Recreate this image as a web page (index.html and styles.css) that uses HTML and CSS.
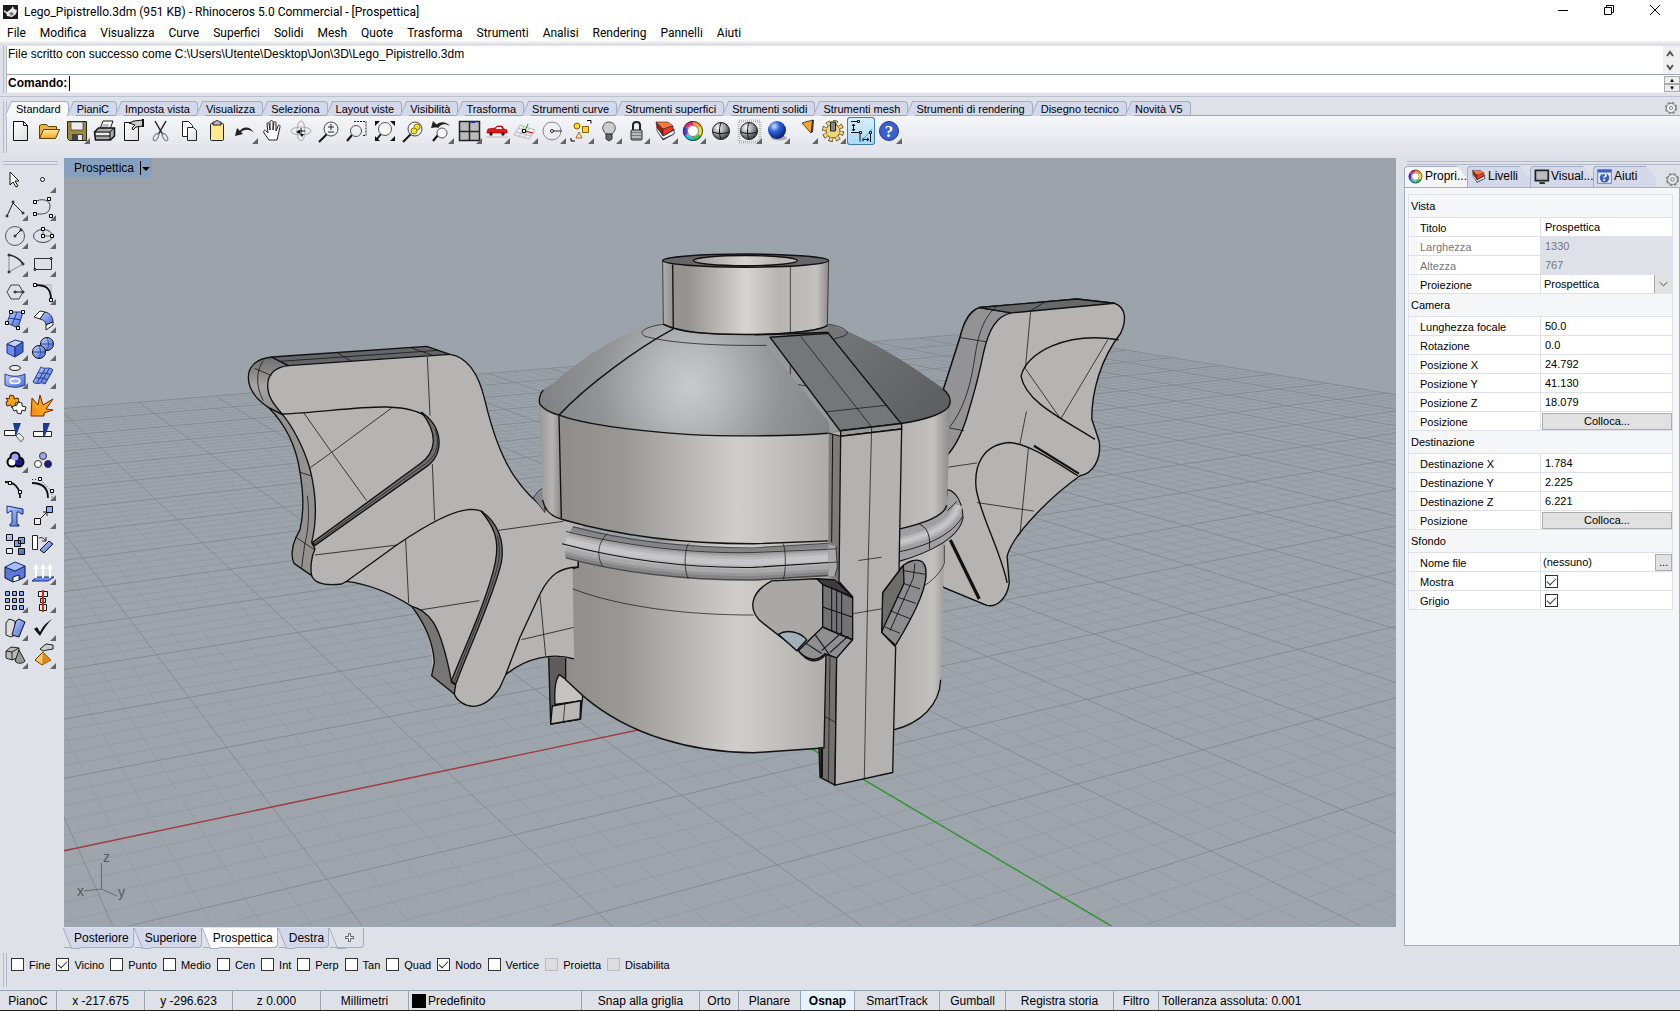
FILE: index.html
```
<!DOCTYPE html>
<html lang="it">
<head>
    <meta charset="UTF-8">
    <meta name="viewport" content="width=device-width, initial-scale=1.0">
    <title>Lego_Pipistrello.3dm - Rhinoceros 5.0 Commercial</title>
    <link rel="stylesheet" href="styles.css">
</head>
<body>

    <!-- shared gradients and small symbols -->
    <svg class="defs" width="0" height="0" aria-hidden="true">
        <defs>
            <linearGradient id="blue" x1="0" y1="0" x2="1" y2="1"><stop offset="0" stop-color="#c3d2ff"/><stop offset="1" stop-color="#4468d8"/></linearGradient>
            <linearGradient id="paper" x1="0" y1="0" x2="1" y2="1"><stop offset="0" stop-color="#fff"/><stop offset="1" stop-color="#ddd"/></linearGradient>
            <linearGradient id="gold" x1="0" y1="0" x2="0" y2="1"><stop offset="0" stop-color="#ffe9a0"/><stop offset="1" stop-color="#f3a81c"/></linearGradient>
            <radialGradient id="grayBall" cx=".35" cy=".3" r=".8"><stop offset="0" stop-color="#fff"/><stop offset=".5" stop-color="#999"/><stop offset="1" stop-color="#222"/></radialGradient>
            <radialGradient id="blueBall" cx=".35" cy=".3" r=".75"><stop offset="0" stop-color="#cfe0ff"/><stop offset=".4" stop-color="#2a62d8"/><stop offset="1" stop-color="#061a6a"/></radialGradient>
            <symbol id="lens" viewBox="0 0 28 28"><path d="M12 17L4 25" stroke="#111" stroke-width="2"/><circle cx="16" cy="12" r="7" fill="#f4f6f6" fill-opacity=".6" stroke="#444"/></symbol>
            <symbol id="wheel" viewBox="0 0 28 28">
                <g fill="none" stroke-width="4"><path d="M14 6a8 8 0 0 1 7 4" stroke="#ff9a1a"/><path d="M21 10a8 8 0 0 1 0 8" stroke="#f4e81e"/><path d="M21 18a8 8 0 0 1-7 4" stroke="#2fc444"/><path d="M14 22a8 8 0 0 1-7-4" stroke="#27bfe0"/><path d="M7 18a8 8 0 0 1 0-8" stroke="#5a35d8"/><path d="M7 10a8 8 0 0 1 7-4" stroke="#e8267c"/></g>
                <circle cx="14" cy="14" r="9.500" fill="none" stroke="#333"/><circle cx="14" cy="14" r="5.500" fill="#fff" stroke="#777"/>
            </symbol>
            <symbol id="layers" viewBox="0 0 28 28"><path d="M6 13l6 10 11-6V12L11 17z" fill="#15205e" stroke="#111" stroke-width=".6"/><path d="M6 10l6 9 11-6v4l-11 5-6-8z" fill="#f4f4ff" stroke="#222" stroke-width=".6"/><path d="M5 5l7 6v7L6 11z" fill="#b3180c" stroke="#222" stroke-width=".6"/><path d="M5 5l12 0 5 4-10 3z" fill="#ff7a3a" stroke="#222" stroke-width=".6"/><path d="M12 12l10-3v4l-10 6z" fill="#ee3a1c" stroke="#222" stroke-width=".6"/></symbol>
            <symbol id="gear" viewBox="0 0 14 14"><circle cx="7" cy="7" r="5.300" fill="none" stroke="#888" stroke-width="1.800" stroke-dasharray="2.600 1.560"/><circle cx="7" cy="7" r="4.600" fill="#eceef2" stroke="#888"/><circle cx="7" cy="7" r="1.600" fill="none" stroke="#888"/></symbol>
        </defs>
    </svg>

    <header class="titlebar">
        <svg class="app-icon" viewBox="0 0 15 14"><rect width="15" height="14" fill="#1a1a1a"/><path d="M1 5l3 2 4-3 2-3 1 3 3 1-1 4-4 3-5-1-1-3-2-1z" fill="#e8e8e8"/><path d="M6 8l3-1 2 2-3 2z" fill="#777"/></svg>
        <span class="title">Lego_Pipistrello.3dm (951 KB) - Rhinoceros 5.0 Commercial - [Prospettica]</span>
        <div class="window-buttons">
            <button aria-label="Riduci a icona"><svg viewBox="0 0 12 12"><path d="M1 6.500h10" stroke="#000" fill="none"/></svg></button>
            <button aria-label="Ripristina"><svg viewBox="0 0 12 12"><path d="M1.500 3.500h7v7h-7zM3.500 3.500v-2h7v7h-2" stroke="#000" fill="none"/></svg></button>
            <button aria-label="Chiudi"><svg viewBox="0 0 12 12"><path d="M1 1l10 10M11 1L1 11" stroke="#000" fill="none"/></svg></button>
        </div>
    </header>

    <nav class="menubar">
        <button>File</button><button>Modifica</button><button>Visualizza</button><button>Curve</button><button>Superfici</button><button>Solidi</button><button>Mesh</button><button>Quote</button><button>Trasforma</button><button>Strumenti</button><button>Analisi</button><button>Rendering</button><button>Pannelli</button><button>Aiuti</button>
    </nav>

    <section class="command">
        <div class="grip"></div>
        <div class="command-main">
            <div class="history">
                <p>File scritto con successo come C:\Users\Utente\Desktop\Jon\3D\Lego_Pipistrello.3dm</p>
                <div class="scroll">
                    <svg viewBox="0 0 14 28"><path d="M4 10l3-4 3 4M4 19l3 4 3-4" fill="none" stroke="#555" stroke-width="2"/></svg>
                </div>
            </div>
            <div class="prompt">
                <label for="cmd">Comando:</label>
                <i class="caret"></i>
                <input id="cmd" type="text">
                <div class="spin"><button aria-label="Precedente">▲</button><button aria-label="Successivo">▼</button></div>
            </div>
        </div>
    </section>

    <section class="toolbar">
        <div class="grip"></div>
        <div class="toolbar-main">
            <div class="tabs">
                <button class="tab active">Standard</button><button class="tab">PianiC</button><button class="tab">Imposta vista</button><button class="tab">Visualizza</button><button class="tab">Seleziona</button><button class="tab">Layout viste</button><button class="tab">Visibilità</button><button class="tab">Trasforma</button><button class="tab">Strumenti curve</button><button class="tab">Strumenti superfici</button><button class="tab">Strumenti solidi</button><button class="tab">Strumenti mesh</button><button class="tab">Strumenti di rendering</button><button class="tab">Disegno tecnico</button><button class="tab">Novità V5</button>
                <svg class="gear"><use href="#gear"/></svg>
            </div>
            <div class="tools">
                <button class="tool" aria-label="Nuovo"><svg viewBox="0 0 28 28"><path d="M6.500 4.500h10l4 4v15h-14z" fill="url(#paper)" stroke="#111"/><path d="M16.500 4.500v4h4" fill="none" stroke="#111"/></svg></button>
                <button class="tool" aria-label="Apri"><svg viewBox="0 0 28 28"><path d="M4.500 21.500v-13l2-1h5l2 2h8v3" fill="#e8b43a" stroke="#5a4208"/><path d="M4.500 21.500l4-9h16l-4 9z" fill="url(#gold)" stroke="#5a4208"/></svg></button>
                <button class="tool more" aria-label="Salva"><svg viewBox="0 0 28 28"><path d="M4.500 4.500h19v19h-17l-2-2z" fill="#9d8a3c" stroke="#222"/><path d="M8 5h12v8H8z" fill="#eee" stroke="#333" stroke-width=".7"/><path d="M9 17h11v6H9z" fill="#444"/><path d="M15 18h4v5h-4z" fill="#eee"/></svg></button>
                <button class="tool" aria-label="Stampa"><svg viewBox="0 0 28 28"><path d="M9 12l3-8h10l-3 8z" fill="#fff" stroke="#111"/><path d="M12 8h6M11 10h6" stroke="#777"/><path d="M3.500 15l4-4h16v8l-4 4h-15z" fill="#aaa" stroke="#111" stroke-width="1.500"/><path d="M4 15h15v8M19 15l4-4M4 19h15" fill="none" stroke="#111"/><path d="M5 16h13v2H5z" fill="#eee"/></svg></button>
                <button class="tool" aria-label="Proprietà"><svg viewBox="0 0 28 28"><path d="M5.500 5.500h10l4 4v14h-14z" fill="url(#paper)" stroke="#111"/><path d="M10 6l5-2 9-1v6l-7 1-3 3-1-2 3-3z" fill="#ccc" stroke="#111"/><path d="M24 2v8" stroke="#111" stroke-width="2"/></svg></button>
                <button class="tool" aria-label="Taglia"><svg viewBox="0 0 28 28"><path d="M8 4l8 14M19 4l-8 14" stroke="#222" stroke-width="1.500"/><ellipse cx="9" cy="20" rx="2" ry="4" transform="rotate(30 9 20)" fill="none" stroke="#888" stroke-width="1.300"/><ellipse cx="18" cy="20" rx="2" ry="4" transform="rotate(-30 18 20)" fill="none" stroke="#888" stroke-width="1.300"/></svg></button>
                <button class="tool" aria-label="Copia"><svg viewBox="0 0 28 28"><path d="M7.500 4.500h6l4 4v11h-10z" fill="#fff" stroke="#222"/><path d="M12.500 10.500h6l3 3v10h-9z" fill="url(#paper)" stroke="#222"/></svg></button>
                <button class="tool" aria-label="Incolla"><svg viewBox="0 0 28 28"><rect x="7.500" y="6.500" width="13" height="17" rx="1" fill="#fbe98c" stroke="#222"/><path d="M10 5h2c0-2 4-2 4 0h2v3h-8z" fill="#bbb" stroke="#222"/></svg></button>
                <button class="tool more" aria-label="Annulla"><svg viewBox="0 0 28 28"><path d="M8 15C12 9 19 9 23 16c-4-4-9-4-13-1z" fill="#222"/><path d="M4 19l2-8 6 6z" fill="#222"/></svg></button>
                <button class="tool" aria-label="Panoramica"><svg viewBox="0 0 28 28"><path d="M10 23l-5-7c-1-3 1-4 3-1l1 1-1-9c0-2 2-2 2 0l1 6V5c0-2 3-2 3 0v8l1-7c0-2 2-2 2 0v8l2-5c1-2 2-1 2 1l-3 13z" fill="#fff" stroke="#222"/></svg></button>
                <button class="tool" aria-label="Ruota vista"><svg viewBox="0 0 28 28"><ellipse cx="14" cy="14" rx="10" ry="4" fill="none" stroke="#aaa"/><ellipse cx="14" cy="14" rx="4" ry="10" fill="none" stroke="#aaa"/><path d="M14 11v6M11 14h7" stroke="#111"/><path d="M9 15l4 2v-4zM15 20l2-3h-4z" fill="#111"/></svg></button>
                <button class="tool" aria-label="Zoom dinamico"><svg viewBox="0 0 28 28"><use href="#lens" width="28" height="28"/><path d="M13 10h6M16 7v6M13 15h6" stroke="#222" fill="none"/></svg></button>
                <button class="tool" aria-label="Zoom finestra"><svg viewBox="0 0 28 28"><path d="M11 4.500h12v14h-4" fill="none" stroke="#222" stroke-dasharray="2 1"/><path d="M9 18l-5 6" stroke="#111" stroke-width="2"/><circle cx="13" cy="14" r="5.500" fill="none" stroke="#555"/></svg></button>
                <button class="tool" aria-label="Zoom estensioni"><svg viewBox="0 0 28 28"><path d="M10 17l-4 5" stroke="#111" stroke-width="2"/><circle cx="14" cy="12" r="6.500" fill="#f6f6f6" stroke="#555"/><path d="M4 4h5L4 9zM24 4h-5l5 5zM4 24v-5l5 5zM24 24v-5l-5 5z" fill="#111"/></svg></button>
                <button class="tool" aria-label="Zoom selezione"><svg viewBox="0 0 28 28"><use href="#lens" width="28" height="28"/><circle cx="18" cy="10" r="3" fill="#f5e12a" stroke="#8a7a00"/><circle cx="15" cy="14" r="3" fill="#f5e12a" stroke="#8a7a00"/></svg></button>
                <button class="tool more" aria-label="Vista precedente"><svg viewBox="0 0 28 28"><path d="M11 18l-5 6" stroke="#111" stroke-width="2"/><circle cx="15" cy="16" r="5" fill="#f6f6f6" stroke="#555"/><path d="M8 9c4-5 11-5 15 0-5-3-9-2-12 2z" fill="#222"/><path d="M4 11l2-7 6 6z" fill="#222"/></svg></button>
                <button class="tool more" aria-label="Viste"><svg viewBox="0 0 28 28"><path d="M4.500 4.500h20v19h-20z" fill="#bbb" stroke="#222" stroke-width="1.500"/><path d="M14.500 4v20M4 14.500h21" stroke="#222" stroke-width="1.500"/><path d="M16 5h4" stroke="#22c" stroke-width="2"/></svg></button>
                <button class="tool more" aria-label="Veicolo"><svg viewBox="0 0 28 28"><path d="M4 15l1-3 7-1 2-2h5l2 3 3 1v3H4z" fill="#e01818" stroke="#900" stroke-width=".7"/><path d="M14 10h4l1 2h-6z" fill="#fff"/><circle cx="8" cy="17" r="1.700" fill="#222"/><circle cx="20" cy="17" r="1.700" fill="#222"/><path d="M3 20h22" stroke="#ccc" stroke-width="1.500"/></svg></button>
                <button class="tool more" aria-label="Piano di costruzione"><svg viewBox="0 0 28 28"><path d="M9 8l15 5-6 9-15-4zM7 11l15 5M5 15l15 4M13 9l-5 11M18 11l-5 10" fill="none" stroke="#bbb"/><path d="M13 14l9 2" stroke="#e00"/><path d="M14 14l3-7" stroke="#0a0"/><path d="M11.500 12.500h3v3h-3z" fill="#fff" stroke="#000"/></svg></button>
                <button class="tool more" aria-label="Cerchio"><svg viewBox="0 0 28 28"><circle cx="13" cy="14" r="9" fill="none" stroke="#888"/><path d="M13 14h10" stroke="#333"/><circle cx="13" cy="14" r="1.500" fill="#fff" stroke="#222"/></svg></button>
                <button class="tool more" aria-label="Seleziona oggetti"><svg viewBox="0 0 28 28"><path d="M20 3.500h4v3M4 21v3h4" fill="none" stroke="#000"/><circle cx="10" cy="9" r="3" fill="#f8dc20" stroke="#8a5a00"/><path d="M15.500 9.500h6v6h-6z" fill="#f8dc20" stroke="#8a5a00"/><path d="M12 15l3 6H9z" fill="#fbe7c0" stroke="#b06818"/></svg></button>
                <button class="tool more" aria-label="Luce"><svg viewBox="0 0 28 28"><path d="M11 17c-6-5-3-12 3-12s9 7 3 12z" fill="#ccc" stroke="#555"/><path d="M11 17h6v5l-3 2-3-2z" fill="#666" stroke="#333"/></svg></button>
                <button class="tool more" aria-label="Blocca"><svg viewBox="0 0 28 28"><path d="M10 13V8c0-4 7-4 7 0v5" fill="none" stroke="#222" stroke-width="2"/><rect x="8" y="13" width="11" height="10" rx="1" fill="#bbb" stroke="#222"/><path d="M9 15.500h9M9 18.500h9M9 21.500h9" stroke="#777"/></svg></button>
                <button class="tool more" aria-label="Livelli"><svg><use href="#layers"/></svg></button>
                <button class="tool more" aria-label="Proprietà colore"><svg><use href="#wheel"/></svg></button>
                <button class="tool" aria-label="Ombreggia"><svg viewBox="0 0 28 28"><circle cx="14" cy="14" r="8.500" fill="url(#grayBall)" stroke="#222"/><path d="M6 15c5 2 11 2 16 0M14 6c-2 4-2 12 0 16" fill="none" stroke="#111"/></svg></button>
                <button class="tool more" aria-label="Ombreggia selezione"><svg viewBox="0 0 28 28"><path d="M4 4h21v21H4z" fill="none" stroke="#bbb" stroke-width="3" stroke-dasharray="1 1"/><circle cx="14" cy="14" r="8.500" fill="url(#grayBall)" stroke="#222"/><path d="M6 15c5 2 11 2 16 0M14 6c-2 4-2 12 0 16" fill="none" stroke="#111"/></svg></button>
                <button class="tool more" aria-label="Rendering"><svg viewBox="0 0 28 28"><ellipse cx="16" cy="21" rx="8" ry="2.500" fill="#aaa"/><circle cx="14" cy="13" r="9" fill="url(#blueBall)"/></svg></button>
                <button class="tool more" aria-label="Riflettore"><svg viewBox="0 0 28 28"><path d="M11 6l11-3-2 13z" fill="#f5a623" stroke="#222" stroke-width=".8"/><path d="M21 3l2 0-1 12-2 1z" fill="#333"/></svg></button>
                <button class="tool more" aria-label="Opzioni"><svg viewBox="0 0 28 28"><circle cx="14" cy="14" r="8.500" fill="none" stroke="#5a4610" stroke-width="5" stroke-dasharray="4 2.670"/><circle cx="14" cy="14" r="7" fill="#f0d47a" stroke="#5a4610"/><circle cx="14" cy="14" r="8.500" fill="none" stroke="#f0d47a" stroke-width="3.500" stroke-dasharray="3 3.670" stroke-dashoffset="-.5"/><path d="M11.500 5h5v9h-5z" fill="#888" stroke="#222"/></svg></button>
                <button class="tool pressed" aria-label="Quote"><svg viewBox="0 0 28 28"><path d="M4 4.500h7M6.500 7v7M4 15.500h9v9M23.500 16v9M15 22.500h7" fill="none" stroke="#111"/><path d="M5 9l1.500-2L8 9M5 12l1.500 2L8 12M17 21l-2 1.500 2 1.500M20 21l2 1.500-2 1.500" fill="none" stroke="#111"/><path d="M14 25L25 12" stroke="#4a8fd0"/><path d="M10.500 3.500h2v2h-2zM12.500 14.500h2v2h-2zM22.500 14.500h2v2h-2z" fill="#fff" stroke="#111"/></svg></button>
                <button class="tool more" aria-label="Aiuti"><svg viewBox="0 0 28 28"><circle cx="14" cy="14" r="9.500" fill="#3a60cc" stroke="#1d3a94"/><text x="14" y="20" class="qmark">?</text></svg></button>
            </div>
        </div>
    </section>

    <main class="workspace">
        <aside class="sidebar">
            <div class="hgrip"></div>
            <div class="palette">
                <button class="tool" aria-label="Selezione"><svg viewBox="0 0 28 28"><path d="M9 6v13l3-3 3 5 2-1-3-5h4z" fill="#fff" stroke="#111"/></svg></button>
                <button class="tool more" aria-label="Punto"><svg viewBox="0 0 28 28"><circle cx="13.500" cy="13.500" r="2" fill="#fff" stroke="#111"/></svg></button>
                <button class="tool more" aria-label="Polilinea"><svg viewBox="0 0 28 28"><path d="M6 22l6-13 10 10" fill="none" stroke="#222"/><g class="node"><circle cx="6" cy="22" r="1"/><circle cx="12" cy="8" r="1"/><circle cx="22" cy="19" r="1"/></g></svg></button>
                <button class="tool more" aria-label="Curva"><svg viewBox="0 0 28 28"><path d="M6 8c5-4 16-3 15 5s-8 7-15 7" fill="none" stroke="#444"/><path class="node" d="M4.500 6.500h3v3h-3zM18.500 3.500h3v3h-3zM4.500 18.500h3v3h-3zM20.500 20.500h3v3h-3z"/></svg></button>
                <button class="tool more" aria-label="Cerchio"><svg viewBox="0 0 28 28"><circle cx="14" cy="14" r="9.500" fill="none" stroke="#555"/><path d="M14 14l6-6" stroke="#111"/><g class="node"><circle cx="14" cy="14" r="1"/><circle cx="20" cy="8" r="1"/></g></svg></button>
                <button class="tool more" aria-label="Ellisse"><svg viewBox="0 0 28 28"><ellipse cx="14" cy="14" rx="9.500" ry="6.500" fill="none" stroke="#444"/><path d="M14 7v7h9" fill="none" stroke="#666"/><path class="node" d="M12.500 5.500h3v3h-3zM12.500 12.500h3v3h-3zM21.500 12.500h3v3h-3z"/></svg></button>
                <button class="tool more" aria-label="Arco"><svg viewBox="0 0 28 28"><path d="M8 5c6 1 11 4 14 9" fill="none" stroke="#222" stroke-width="1.500"/><path d="M22 14L8 22V5" fill="none" stroke="#888"/><g class="node"><circle cx="8" cy="5" r="1"/><circle cx="22" cy="14" r="1"/><circle cx="8" cy="22" r="1"/></g></svg></button>
                <button class="tool more" aria-label="Rettangolo"><svg viewBox="0 0 28 28"><path d="M5.500 8.500h17v11h-17z" fill="none" stroke="#333"/><g class="node"><circle cx="22" cy="8.500" r="1"/><circle cx="6" cy="19.500" r="1"/></g></svg></button>
                <button class="tool more" aria-label="Poligono"><svg viewBox="0 0 28 28"><path d="M10 7h8l4 7-4 7h-8l-4-7z" fill="none" stroke="#444"/><path d="M14 14h8" stroke="#111"/><g class="node"><circle cx="14" cy="14" r="1"/><circle cx="22" cy="14" r="1"/></g></svg></button>
                <button class="tool more" aria-label="Raccorda"><svg viewBox="0 0 28 28"><path d="M6 7h16v15" fill="none" stroke="#aaa"/><path d="M6 7c11 0 16 3 16 15" fill="none" stroke="#111" stroke-width="1.800"/><path class="node" d="M4.500 5.500h3v3h-3zM20.500 20.500h3v3h-3z"/></svg></button>
                <button class="tool more" aria-label="Superficie"><svg viewBox="0 0 28 28"><path d="M10 6h12l-5 16-11-5z" fill="url(#blue)" stroke="#223a8a"/><path d="M16 6l-5 13M8 12l12 2" stroke="#223a8a"/><path class="node" d="M8.500 4.500h3v3h-3zM20.500 4.500h3v3h-3zM15.500 20.500h3v3h-3zM4.500 15.500h3v3h-3z"/></svg></button>
                <button class="tool more" aria-label="Raccorda superfici"><svg viewBox="0 0 28 28"><path d="M5 11l6-6 5 1-5 7z" fill="#fff" stroke="#222"/><path d="M11 13l5-7c5 1 8 5 8 10l-7 3c0-3-2-5-6-6z" fill="url(#blue)" stroke="#222"/><path d="M24 16v3l-7 5v-5z" fill="#fff" stroke="#222"/></svg></button>
                <button class="tool more" aria-label="Parallelepipedo"><svg viewBox="0 0 28 28"><path d="M6 10l8 3v10l-8-4z" fill="#6f8df0" stroke="#1b2c78"/><path d="M6 10l8-4 8 2-8 5z" fill="#c5d3ff" stroke="#1b2c78"/><path d="M14 13l8-5v10l-8 5z" fill="#4563cf" stroke="#1b2c78"/></svg></button>
                <button class="tool more" aria-label="Booleana"><svg viewBox="0 0 28 28"><circle cx="18" cy="10" r="6.500" fill="url(#blue)" stroke="#111"/><circle cx="10" cy="18" r="6.500" fill="url(#blue)" stroke="#111"/><path d="M12 10h12M18 4c2 4 2 8 0 12M4 18h12M10 12c2 4 2 8 0 12" fill="none" stroke="#223a8a" stroke-width=".8"/></svg></button>
                <button class="tool more" aria-label="Proietta curva"><svg viewBox="0 0 28 28"><ellipse cx="14" cy="6" rx="5.500" ry="2.500" fill="#eee" stroke="#222"/><path d="M4 12c6 3 14 3 20 0v11c-6 3-14 3-20 0z" fill="url(#blue)" stroke="#223a8a"/><ellipse cx="14" cy="19" rx="5" ry="2.500" fill="#9db4ff" stroke="#fff" stroke-width="1.500"/></svg></button>
                <button class="tool more" aria-label="Mesh"><svg viewBox="0 0 28 28"><path d="M12 5c4 3 8-1 12 3l-8 14c-5-3-7 2-12-2z" fill="url(#blue)" stroke="#223a8a"/><path d="M9 10c4 3 8-1 12 3M6 15c4 3 8-1 12 3M16 7L8 21M20 7l-8 13" fill="none" stroke="#223a8a"/></svg></button>
                <button class="tool" aria-label="Unisci"><svg viewBox="0 0 28 28"><path d="M5 8l3 1 1-4 4 1 0 3 4-1 1 4-4 1 1 4-4 1-1-3-4 1-1-4 2-1z" fill="#f5a318" stroke="#4a3000"/><path d="M13 16l3-1 1-3 4 1v3l4 1-1 4-3-1-1 4-4-1 0-3-3 1-2-4z" fill="#fff" stroke="#222"/></svg></button>
                <button class="tool" aria-label="Esplodi"><svg viewBox="0 0 28 28"><path d="M3 8l6 7 2-10 3 10 10-6-7 10 7 1-9 3v3H2z" fill="#f7a21b" stroke="#7a2600"/><path d="M3 25V14l6 9" fill="#ff8a10"/></svg></button>
                <button class="tool" aria-label="Taglia oggetti"><svg viewBox="0 0 28 28"><path d="M3.500 12.500h11v5h-11z" fill="#fff" stroke="#222"/><path d="M12 5h8l-5 13z" fill="#1d3a94"/><path d="M15 18l3-3 5 5-3 4z" fill="#e6e6e6" stroke="#666"/></svg></button>
                <button class="tool" aria-label="Suddividi"><svg viewBox="0 0 28 28"><path d="M4.500 13.500h18v5h-18z" fill="#fff" stroke="#222"/><path d="M14 5h7l-5 13h-2z" fill="#1d3a94"/></svg></button>
                <button class="tool more" aria-label="Raggruppa"><svg viewBox="0 0 28 28"><g stroke="#000" stroke-width="3"><circle cx="14" cy="11" r="4"/><circle cx="11" cy="16" r="4"/><circle cx="18" cy="16" r="4"/></g><circle cx="11" cy="16" r="3.500" fill="#fff"/><circle cx="18" cy="16" r="3.500" fill="#1a1a8a"/><circle cx="14" cy="11" r="3.500" fill="#a3a3f5"/></svg></button>
                <button class="tool" aria-label="Separa"><svg viewBox="0 0 28 28"><g stroke="#333"><circle cx="14" cy="10" r="3.500" fill="#a3a3f5"/><circle cx="9" cy="18" r="3.500" fill="#fff"/><circle cx="19" cy="18" r="3.500" fill="#1a1a8a"/></g></svg></button>
                <button class="tool" aria-label="Modifica punti"><svg viewBox="0 0 28 28"><path d="M4 8c9 0 15 5 15 16" fill="none" stroke="#111" stroke-width="1.800"/><path class="node" d="M7.500 7.500h3v3h-3zM17.500 16.500h3v3h-3z"/></svg></button>
                <button class="tool more" aria-label="Punti di controllo"><svg viewBox="0 0 28 28"><path d="M3 9c10 0 16 5 16 15" fill="none" stroke="#111" stroke-width="1.800"/><path d="M3 5.500h8l12 12v9" fill="none" stroke="#222" stroke-dasharray="1 2"/><path class="node" d="M9.500 3.500h3v3h-3zM21.500 15.500h3v3h-3z"/></svg></button>
                <button class="tool" aria-label="Testo"><svg viewBox="0 0 28 28"><path d="M6 4l16 3v5h-2l-2-2-2 0v12l2 1v1H9v-2l2-1V9H9l-2 2H6z" fill="url(#blue)" stroke="#1b2c78"/></svg></button>
                <button class="tool more" aria-label="Sposta"><svg viewBox="0 0 28 28"><path d="M12 16l6-6M14 10h4v4" fill="none" stroke="#222"/><path d="M17.500 4.500h6v6h-6z" fill="#8fa9ff" stroke="#111"/><path d="M5.500 16.500h6v6h-6z" fill="#eee" stroke="#111"/></svg></button>
                <button class="tool" aria-label="Copia oggetti"><svg viewBox="0 0 28 28"><g fill="url(#blue)" stroke="#111"><path d="M5.500 4.500h6v6h-6zM17.500 7.500h6v6h-6zM13.500 10.500h6v6h-6zM17.500 18.500h6v6h-6z"/></g><path d="M5.500 18.500h6v5h-6z" fill="#eee" stroke="#111"/></svg></button>
                <button class="tool" aria-label="Ruota"><svg viewBox="0 0 28 28"><path d="M3.500 5.500h5v14h-5z" fill="#fff" stroke="#222"/><path d="M10 8c3-1 5 0 7 3M13 11h4V7" fill="none" stroke="#222"/><path d="M11 20l9-9 4 3-9 9z" fill="url(#blue)" stroke="#111"/></svg></button>
                <button class="tool more" aria-label="Solido"><svg viewBox="0 0 28 28"><path d="M4 9l10 4 10-5v11l-6 3v-5l-6 2v5l-8-4z" fill="#5878e0" stroke="#111"/><path d="M4 9l10 4 10-5-10-4z" fill="#a9bdff" stroke="#1b2c78"/><path d="M12 24v-5l6-2v5z" fill="#fff" stroke="#1b2c78"/></svg></button>
                <button class="tool more" aria-label="Estrudi"><svg viewBox="0 0 28 28"><path d="M3 23l5-4h17l-6 4z" fill="#6f8df0" stroke="#1b2c78"/><path d="M7 20V9M14 20V9M21 20V9" stroke="#fff" stroke-width="2"/><path d="M4 11l3-5 3 5zM11 11l3-5 3 5zM18 11l3-5 3 5z" fill="#fff"/></svg></button>
                <button class="tool more" aria-label="Serie"><svg viewBox="0 0 28 28"><path d="M4.500 5.500h4v4h-4zM11.500 5.500h4v4h-4zM18.500 5.500h4v4h-4zM4.500 12.500h4v4h-4zM11.500 12.500h4v4h-4zM18.500 12.500h4v4h-4zM11.500 19.500h4v4h-4zM18.500 19.500h4v4h-4z" fill="#8fa9ff" stroke="#111"/><path d="M4.500 19.500h4v4h-4z" fill="#eee" stroke="#111"/></svg></button>
                <button class="tool more" aria-label="Allinea"><svg viewBox="0 0 28 28"><path d="M9.500 5.500h9v5h-9zM11.500 12.500h5v4h-5zM10.500 18.500h7v6h-7z" fill="#eee" stroke="#111"/><path d="M14 4v22" stroke="#d22" stroke-width="2"/></svg></button>
                <button class="tool more" aria-label="Analizza"><svg viewBox="0 0 28 28"><path d="M5 9l3-4 6 2v14l-4 2-5-2z" fill="#ddd" stroke="#222"/><path d="M15 7l3-2 6 3-6 15-7-2z" fill="url(#blue)" stroke="#111"/></svg></button>
                <button class="tool more" aria-label="Controlla"><svg viewBox="0 0 28 28"><path d="M5 15l3-2 3 5c3-6 6-9 12-13-5 5-8 10-12 17z" fill="#111"/></svg></button>
                <button class="tool more" aria-label="Primitive"><svg viewBox="0 0 28 28"><path d="M5 9l5-4 8 1v9l-7 3-6-2z" fill="#bbb" stroke="#222"/><path d="M5 9l6 1v8M11 10l7-4" fill="none" stroke="#222"/><path d="M18 8l6 11c-2 3-8 3-10 0z" fill="#999" stroke="#222"/></svg></button>
                <button class="tool more" aria-label="Piramide"><svg viewBox="0 0 28 28"><path d="M11 7l6-5 7 1v4l-6 1-4 1z" fill="#ccc" stroke="#222"/><path d="M14 10l8 8-9 5-7-5z" fill="#f6c86a" stroke="#6b3d00"/><path d="M14 10l-1 13 9-5z" fill="#d68a20"/></svg></button>
            </div>
        </aside>

        <section class="center">
            <div class="viewport">
                <button class="view-label"><span>Prospettica</span><i></i></button>
                <svg class="scene" viewBox="64 159 1332 768" preserveAspectRatio="xMidYMid slice">
                    <defs>
                        <linearGradient id="sky" x1="0" y1="0" x2="0" y2="1"><stop offset="0" stop-color="#9ba2aa"/><stop offset="1" stop-color="#9ea5ac"/></linearGradient>
                        <linearGradient id="cyl" gradientUnits="userSpaceOnUse" x1="60" y1="0" x2="1290" y2="0"><stop offset="0" stop-color="#9a9998"/><stop offset=".03" stop-color="#b5b4b2"/><stop offset=".05" stop-color="#8e8d8a"/><stop offset=".2" stop-color="#989794"/><stop offset=".36" stop-color="#b8b7b4"/><stop offset=".48" stop-color="#cfceca"/><stop offset=".56" stop-color="#c4c3c0"/><stop offset=".7" stop-color="#aeadab"/><stop offset=".88" stop-color="#b4b3b1"/><stop offset=".96" stop-color="#c2c1be"/><stop offset="1" stop-color="#8c8b89"/></linearGradient>
                        <linearGradient id="neck" gradientUnits="userSpaceOnUse" x1="428" y1="0" x2="926" y2="0"><stop offset="0" stop-color="#b0afad"/><stop offset=".06" stop-color="#949391"/><stop offset=".15" stop-color="#94938f"/><stop offset=".5" stop-color="#d6d5d2"/><stop offset=".7" stop-color="#b6b5b2"/><stop offset=".93" stop-color="#c2c1be"/><stop offset="1" stop-color="#8c8b89"/></linearGradient>
                        <radialGradient id="cone" gradientUnits="userSpaceOnUse" cx="510" cy="430" r="640"><stop offset="0" stop-color="#c8cacc"/><stop offset=".15" stop-color="#b8babc"/><stop offset=".42" stop-color="#929496"/><stop offset=".75" stop-color="#7c7e80"/><stop offset="1" stop-color="#68696b"/></radialGradient>
                        <linearGradient id="coneDark" gradientUnits="userSpaceOnUse" x1="950" y1="300" x2="1200" y2="520"><stop offset="0" stop-color="#737577"/><stop offset="1" stop-color="#5f6062"/></linearGradient>
                        <linearGradient id="strip" x1="0" y1="0" x2="0" y2="1"><stop offset="0" stop-color="#6c6c6e"/><stop offset=".5" stop-color="#a5a4a2"/><stop offset="1" stop-color="#8c8b8a"/></linearGradient>
                    </defs>
                    <rect x="64" y="159" width="1332" height="768" fill="url(#sky)"/>
                    <g fill="none">
                        <path id="grid-minor" class="grid-minor"/>
                        <path id="grid-major" class="grid-major"/>
                        <path id="axis-x" class="axis-x"/>
                        <path id="axis-y" class="axis-y"/>
                    </g>

                    <!-- right wing -->
                    <g transform="scale(1.0714)" stroke="#111" stroke-width="1.300" stroke-linejoin="round">
                        <path d="M914 288L1005 280L1040 284C1052 288 1051 301 1046 312C1028 335 1019 365 1019 392L1026 413C1028 430 1020 443 1008 445C980 465 945 500 940 520L942 545C940 560 930 568 921 566L880 549L860 440L880 366L896 316C900 300 905 291 914 288Z" fill="#b5b4b2"/>
                        <path d="M914 288C904 292 899 303 896 316L880 366L884 426C893 416 899 403 904 385C911 362 914 350 918 330C923 308 930 296 944 293Z" fill="#939396"/>
                        <path d="M914 288L1005 280L1040 284L944 293Z" fill="#67686a"/>
                        <path d="M930 287C915 300 912 320 909 340C905 365 898 385 886 400M896 316L921 320M884 400L900 403M975 283L962 291M962 291L957 345M957 345L990 392L1034 318" fill="none" stroke-width=".7"/>
                        <path d="M1044 318C995 310 958 330 953 352C957 376 992 392 1022 411" fill="none"/>
                        <path d="M1006 445C985 432 960 415 942 414C918 416 909 434 911 456C914 480 934 515 940 545" fill="none"/>
                        <path d="M887 505L914 560" fill="none" stroke-width="3"/>
                        <path d="M880 549L921 566M885 437L912 433M952 415L958 385M912 470L965 478M960 418L952 500" fill="none" stroke-width=".7"/>
                        <path d="M965 417L1007 443" fill="none" stroke-width="2"/>
                    </g>

                    <!-- left wing -->
                    <g transform="translate(220 330) scale(.33333)" stroke="#111" stroke-width="4" stroke-linejoin="round">
                        <path d="M155 84L620 52L690 76C750 85 780 150 795 215C815 300 840 380 885 445C930 510 980 550 1040 575L1090 590L1075 712L1058 720L1062 990C1000 970 920 985 857 1037C835 1090 800 1125 760 1132C735 1132 710 1115 703 1095L640 1045L635 1015C640 980 630 930 600 860L575 832C510 790 440 765 380 757L365 765C320 770 290 765 275 740L222 703C212 690 215 650 228 620L240 602C252 560 250 500 240 430C225 350 190 280 145 235C100 205 85 170 85 145C85 115 110 90 155 84Z" fill="#b5b4b2" stroke="none"/>
                        <path d="M145 235C200 290 230 360 240 430C252 500 250 560 240 602L228 625C212 660 215 690 222 703L275 740C270 715 275 680 285 660L275 640C292 570 290 500 270 420C250 350 215 290 188 257Z" fill="#93928f"/>
                        <path d="M155 84C105 90 85 115 85 145C85 185 115 215 145 235L188 257C165 230 143 205 143 170C143 135 165 115 205 110Z" fill="url(#strip)"/>
                        <path d="M155 84L620 52L690 76L205 110Z" fill="#646568"/>
                        <path d="M575 832C620 890 640 950 643 1000L635 1040L703 1095L707 1068L695 1060C680 980 665 920 640 880C620 850 600 838 575 832Z" fill="#777674"/>
                        <path d="M690 76C750 85 780 150 795 215C815 300 840 380 885 445C930 510 980 550 1040 575M1075 690V714C1020 716 990 735 960 795L900 925L857 1037M1062 990C1000 970 920 985 857 1037L840 1075C815 1115 790 1130 760 1132C735 1132 710 1115 703 1095M575 832C510 790 440 765 380 757L365 765C320 770 285 765 275 740" fill="none"/>
                        <path d="M188 255C300 250 420 232 500 234C560 236 600 245 625 268M380 757L530 648C600 600 690 545 750 541C765 541 780 543 790 550" fill="none"/>
                        <!-- recess walls, thin at the start and wide along the straight part -->
                        <path d="M605 250C675 300 672 380 612 418L284 650L278 640L598 406C650 370 655 315 605 250Z" fill="#6f6f72"/>
                        <path d="M783 546C835 580 855 640 844 700C825 790 750 950 707 1066L694 1056C745 930 805 800 826 700C840 630 820 590 783 546Z" fill="#6f6f72"/>
                        <path d="M645 300C662 345 650 385 605 412L282 645M832 620C842 660 840 690 826 735C805 810 745 945 703 1058" fill="none" stroke-width="2"/>
                        <path d="M622 84L630 260M637 405L644 575M250 250L335 370L440 515M515 237L335 370L272 415M285 678L532 648M557 632L566 822M600 843L778 815M835 604L1030 577M905 932L1062 895M960 800L977 980M180 97L655 64M350 70L395 97M570 55L635 78M104 118L155 140M240 430L272 440M228 625L283 662M262 500C270 560 262 620 255 640L245 715M130 95C110 120 105 170 130 215" fill="none" stroke-width="2.300"/>
                    </g>

                    <!-- body -->
                    <g transform="translate(520 230) scale(.33333 .3635)" stroke="#111" stroke-width="4" stroke-linejoin="round">
                        <path d="M40 740C50 725 60 715 72 712L75 780Z" fill="#88888a" stroke-width="2"/>
                        <path d="M85 1178H137V1240L188 1285L182 1350L92 1363Z" fill="#5d5c5a" stroke="none"/>
                        <path d="M86 1178L92 1362L182 1348L187 1285" fill="none"/>
                        <path d="M105 1308C102 1260 110 1235 118 1226C140 1240 170 1262 188 1283L187 1298Z" fill="#c4c3c1"/>
                        <path d="M97 1312L182 1298L180 1348L92 1362Z" fill="#b9b8b6"/>
                        <path d="M135 1305L130 1356" stroke-width="2"/>
                        <path d="M175 880V930L158 934L163 1186L137 1180V1240L190 1285C330 1395 520 1440 700 1441L910 1428L1120 1378C1200 1360 1262 1310 1262 1240L1275 800Z" fill="url(#cyl)" stroke="none"/>
                        <path d="M175 905V930L158 934M137 1180V1240L190 1285C330 1395 520 1440 700 1441L910 1428M1120 1378C1200 1360 1260 1310 1262 1240" fill="none"/>
                        <path d="M158 990C300 1040 500 1062 700 1062M1273 870V920C1262 945 1240 965 1215 980" fill="none" stroke-width="2"/>

                        <!-- ring -->
                        <path d="M148 862C320 905 520 922 700 922L952 908" fill="none" stroke="#4a4a4b" stroke-width="92"/>
                        <path d="M145 861C320 905 520 921 700 921L952 907" fill="none" stroke="#858587" stroke-width="85"/>
                        <path d="M142 862C320 905 520 922 700 922L952 908" fill="none" stroke="#989899" stroke-width="66"/>
                        <path d="M140 862C320 905 520 922 700 922L952 908" fill="none" stroke="#a9a9aa" stroke-width="50"/>
                        <path d="M138 859C320 902 520 919 700 919L952 905" fill="none" stroke="#b8b8b9" stroke-width="34"/>
                        <path d="M136 857C320 900 520 917 700 917L952 903" fill="none" stroke="#c6c6c8" stroke-width="16"/>
                        <path d="M126 866C320 913 520 933 700 931L952 916" fill="none" stroke-width="3"/>
                        <path d="M138 832C320 872 520 894 700 890L948 880M262 838C235 860 228 900 248 928M505 865C492 890 492 940 505 962M790 865C798 890 798 940 790 964" fill="none" stroke-width="2"/>
                        <path d="M1137 825C1210 808 1285 780 1282 717C1310 722 1328 755 1329 795C1318 850 1230 890 1135 915Z" fill="#a0a0a2" stroke-width="3"/>
                        <path d="M1137 862C1215 847 1300 817 1315 760" fill="none" stroke="#b6b6b8" stroke-width="26"/>
                        <path d="M1137 862C1215 847 1300 817 1315 760" fill="none" stroke="#c6c6c8" stroke-width="12"/>
                        <path d="M1137 888C1215 874 1300 840 1328 790M1198 812C1222 820 1232 845 1228 880M1282 775L1310 750" fill="none" stroke-width="2.500"/>

                        <!-- upper drum -->
                        <path d="M58 470L68 745C75 780 100 793 130 800C300 845 500 866 700 866L930 858L1140 825C1220 808 1280 785 1282 745L1290 480Z" fill="url(#cyl)" stroke="none"/>
                        <path d="M68 745C75 780 100 793 130 800C300 845 500 866 700 866L925 858M1140 825C1220 808 1275 785 1280 760M117 512L124 795" fill="none"/>
                        <path d="M58 470C60 440 80 435 100 425C180 360 290 285 430 255L925 262C1050 300 1180 380 1270 440C1290 455 1295 475 1288 485C1280 505 1220 525 1143 535L925 562C800 572 600 570 500 565C350 555 200 540 117 512C80 500 58 485 58 470Z" fill="url(#cone)" stroke="none"/>
                        <path d="M925 262C1050 300 1180 380 1270 440C1290 455 1295 475 1288 485C1280 505 1220 525 1143 535L925 287Z" fill="url(#coneDark)" stroke="none"/>
                        <path d="M70 443C58 455 56 472 60 482C72 497 90 505 117 512C200 540 350 555 500 565C600 570 800 572 925 562M1143 535C1220 525 1280 505 1288 485C1294 470 1290 455 1268 440" fill="none"/>
                        <path d="M460 275C350 330 200 430 117 512" fill="none"/>
                        <path d="M430 262C380 268 350 282 375 295C450 315 600 322 745 320M925 262C980 270 995 288 970 295L940 303" fill="none" stroke-width="2"/>

                        <!-- neck -->
                        <path d="M428 87L430 262C480 285 560 290 680 290C800 290 900 280 922 265L926 87Z" fill="url(#neck)" stroke-width="2"/>
                        <path d="M430 262C480 285 560 290 680 290C800 290 900 280 922 265M458 98L460 275" fill="none"/>
                        <path d="M811 104V286" stroke-width="2"/>
                        <ellipse cx="677" cy="87" rx="249" ry="18" fill="#66666a"/>
                        <ellipse cx="676" cy="87" rx="156" ry="14" fill="url(#neck)"/>

                        <!-- side window -->
                        <path d="M755 968C690 1000 680 1050 730 1085L835 1160C865 1195 895 1195 918 1170L950 1182L998 1130V1015L960 975L890 962Z" fill="#a9a8a6"/>
                        <path d="M775 1115C800 1100 840 1108 860 1130L830 1160Z" fill="#a3b0ba"/>
                        <path d="M835 1160L908 1095L998 1130L950 1182L915 1168C895 1190 865 1190 835 1160Z" fill="#8f8f92"/>
                        <path d="M908 975L998 1015V1130L908 1095Z" fill="#737375"/>
                        <path d="M890 962L945 965L998 1012L908 978Z" fill="#3d3d3f"/>
                        <path d="M935 985V1105M950 990V1112M965 998V1116M908 1040L998 1068M858 1140L905 1168M885 1115L935 1180M905 1160L965 1110M930 1165L985 1120" fill="none" stroke-width="3"/>
                        <path d="M1137 940C1150 915 1205 895 1216 930C1228 975 1190 1050 1127 1145L1085 1110L1088 1000Z" fill="#8c8c8f"/>
                        <path d="M1088 1000L1150 925L1152 975L1085 1108Z" fill="#6d6d6a"/>
                        <path d="M1152 940L1216 950M1150 975L1200 990M1130 1012L1188 1030M1110 1050L1170 1072M1095 1095L1140 1112M1185 920L1180 960L1110 1105" fill="none" stroke-width="2.500"/>

                        <!-- front slab -->
                        <path d="M715 293L755 299L962 555L930 560L925 530Z" fill="#98989a" stroke="none"/>
                        <path d="M750 298L925 287L1143 535L960 555Z" fill="#757679"/>
                        <path d="M705 291L755 290L925 284" fill="none"/>
                        <path d="M926 562L962 570L957 970L925 955Z" fill="#7d7c7a" stroke="none"/>
                        <path d="M938 566L935 862M926 562L962 570" fill="none" stroke-width="3"/>
                        <path d="M918 1170L950 1180L945 1530L900 1508L897 1428L912 1428Z" fill="#72716f"/>
                        <path d="M905 1430V1508" stroke-width="8"/>
                        <path d="M962 555L1145 535V550L962 570Z" fill="#9a9a9a"/>
                        <path d="M962 570L1145 550L1137 940L1088 1000L1085 1110L1127 1150L1118 1495L945 1530L950 1180L998 1130V1012L957 970Z" fill="#b3b2b0"/>
                        <path d="M842 295L1055 545L1045 905L1033 1512M918 503L1098 485M1000 1058L1085 1045M912 1340L948 1358M930 1175L925 1520M811 375V400M835 428L860 432M1015 912L1085 903" fill="none" stroke-width="2"/>
                        <!-- ring end against the slab -->
                        <path d="M925 868L948 872L952 930L945 955L925 955Z" fill="#a9a9aa" stroke="none"/>
                        <path d="M925 881L948 880M925 918L952 916M948 872L952 930L945 955" fill="none" stroke-width="2"/>
                    </g>

                    <!-- axes icon -->
                    <g fill="none" stroke="#666a70"><path d="M101.500 864V890L84 892M101.500 890L117 897"/></g>
                    <g class="axis-text"><text x="103" y="863">z</text><text x="77" y="897">x</text><text x="118" y="898">y</text></g>
                </svg>
            </div>
            <div class="view-tabs">
                <button class="vtab">Posteriore</button><button class="vtab">Superiore</button><button class="vtab active">Prospettica</button><button class="vtab">Destra</button><button class="vtab add" aria-label="Nuova vista"><svg viewBox="0 0 9 9"><path d="M3.500.5h2v3h3v2h-3v3h-2v-3h-3v-2h3z" fill="#fff" stroke="#666"/></svg></button>
            </div>
        </section>

        <aside class="panel">
            <div class="hgrip"></div>
            <div class="ptabs">
                <button class="ptab active"><svg><use href="#wheel"/></svg><span>Propri...</span></button>
                <button class="ptab"><svg><use href="#layers"/></svg><span>Livelli</span></button>
                <button class="ptab"><svg viewBox="0 0 28 28"><path d="M5 5h19v15H5z" fill="#b8bcc0" stroke="#222" stroke-width="2.500"/><path d="M11 22h8v3h-8z" fill="#333"/></svg><span>Visual...</span></button>
                <button class="ptab"><svg viewBox="0 0 28 28"><path d="M4 4h20v20H4z" fill="#e8ecf8" stroke="#456"/><path d="M4 4h20v4H4z" fill="#3a60cc"/><circle cx="14" cy="16" r="7" fill="#3a60cc"/><text x="14" y="21" class="qmark">?</text></svg><span>Aiuti</span></button>
                <svg class="gear"><use href="#gear"/></svg>
            </div>
            <div class="pbody">
                <table class="props">
                    <tr class="group"><th colspan="2">Vista</th></tr>
                    <tr><td><label for="titolo">Titolo</label></td><td><input id="titolo" value="Prospettica"></td></tr>
                    <tr class="off"><td><label for="larghezza">Larghezza</label></td><td><input id="larghezza" value="1330" disabled></td></tr>
                    <tr class="off"><td><label for="altezza">Altezza</label></td><td><input id="altezza" value="767" disabled></td></tr>
                    <tr><td><label for="proiezione">Proiezione</label></td><td><div class="combo"><select id="proiezione"><option>Prospettica</option><option>Parallela</option></select><svg viewBox="0 0 18 18"><path d="M5 7l4 4 4-4" fill="none" stroke="#444"/></svg></div></td></tr>
                    <tr class="group"><th colspan="2">Camera</th></tr>
                    <tr><td><label for="focale">Lunghezza focale</label></td><td><input id="focale" value="50.0"></td></tr>
                    <tr><td><label for="rotazione">Rotazione</label></td><td><input id="rotazione" value="0.0"></td></tr>
                    <tr><td><label for="pos-x">Posizione X</label></td><td><input id="pos-x" value="24.792"></td></tr>
                    <tr><td><label for="pos-y">Posizione Y</label></td><td><input id="pos-y" value="41.130"></td></tr>
                    <tr><td><label for="pos-z">Posizione Z</label></td><td><input id="pos-z" value="18.079"></td></tr>
                    <tr><td><label for="pos">Posizione</label></td><td><button id="pos" class="place">Colloca...</button></td></tr>
                    <tr class="group"><th colspan="2">Destinazione</th></tr>
                    <tr><td><label for="dest-x">Destinazione X</label></td><td><input id="dest-x" value="1.784"></td></tr>
                    <tr><td><label for="dest-y">Destinazione Y</label></td><td><input id="dest-y" value="2.225"></td></tr>
                    <tr><td><label for="dest-z">Destinazione Z</label></td><td><input id="dest-z" value="6.221"></td></tr>
                    <tr><td><label for="dest">Posizione</label></td><td><button id="dest" class="place">Colloca...</button></td></tr>
                    <tr class="group"><th colspan="2">Sfondo</th></tr>
                    <tr><td><label for="file">Nome file</label></td><td><div class="combo"><input id="file" value="(nessuno)"><button class="browse">...</button></div></td></tr>
                    <tr><td><label for="mostra">Mostra</label></td><td><input id="mostra" type="checkbox" checked></td></tr>
                    <tr><td><label for="grigio">Grigio</label></td><td><input id="grigio" type="checkbox" checked></td></tr>
                </table>
            </div>
        </aside>
    </main>

    <section class="osnap">
        <div class="grip"></div>
        <label><input type="checkbox">Fine</label>
        <label><input type="checkbox" checked>Vicino</label>
        <label><input type="checkbox">Punto</label>
        <label><input type="checkbox">Medio</label>
        <label><input type="checkbox">Cen</label>
        <label><input type="checkbox">Int</label>
        <label><input type="checkbox">Perp</label>
        <label><input type="checkbox">Tan</label>
        <label><input type="checkbox">Quad</label>
        <label><input type="checkbox" checked>Nodo</label>
        <label><input type="checkbox">Vertice</label>
        <label><input type="checkbox" disabled>Proietta</label>
        <label><input type="checkbox" disabled>Disabilita</label>
    </section>

    <footer class="status">
        <button class="w-plane">PianoC</button>
        <span class="w-coord">x -217.675</span>
        <span class="w-coord">y -296.623</span>
        <span class="w-coord">z 0.000</span>
        <span class="w-coord">Millimetri</span>
        <button class="w-layer"><i></i>Predefinito</button>
        <button class="w-snap">Snap alla griglia</button>
        <button class="w-ortho">Orto</button>
        <button class="w-planar">Planare</button>
        <button class="w-osnap on">Osnap</button>
        <button class="w-track">SmartTrack</button>
        <button class="w-gumball">Gumball</button>
        <button class="w-history">Registra storia</button>
        <button class="w-filter">Filtro</button>
        <span class="rest">Tolleranza assoluta: 0.001</span>
    </footer>

    <script src="script.js"></script>
</body>
</html>
```
FILE: styles.css
```
* {
    margin: 0;
    padding: 0;
    box-sizing: border-box;
}
body {
    display: flex;
    flex-direction: column;
    height: 100vh;
    overflow: hidden;
    background: #dfe1e9;
    color: #000;
    font-family: "Liberation Sans", Arial, sans-serif;
    font-size: 11px;
}
button, input, select {
    font: inherit;
    color: inherit;
    border: none;
    background: none;
    border-radius: 0;
}
.defs {
    position: absolute;
}

/* Title and menu */
.titlebar {
    display: flex;
    align-items: center;
    height: 23px;
    padding: 0 2px 0 3px;
    background: #fff;
    font-family: Roboto, "Segoe UI", sans-serif;
    font-size: 12px;
}
.app-icon {
    width: 15px;
    height: 14px;
    margin-right: 6px;
}
.title {
    flex: 1;
    padding-top: 1px;
}
.window-buttons {
    display: flex;
}
.window-buttons button {
    width: 46px;
    height: 22px;
}
.window-buttons svg {
    width: 12px;
    height: 12px;
}
.menubar {
    display: flex;
    height: 23px;
    background: #fff;
    border-bottom: 3px solid #dfe1e9;
    box-shadow: inset 0 -2px #f0f0f0;
    font-family: Roboto, "Segoe UI", sans-serif;
    font-size: 12px;
}
.menubar button {
    padding: 0 7px;
}

/* Command area */
.grip {
    width: 4px;
    margin: 0 0 0 3px;
    border: 1px solid #b4b9cb;
    border-width: 0 1px;
}
.command {
    display: flex;
    height: 51px;
    padding-bottom: 3px;
    border-bottom: 1px solid #bcc1cf;
}
.command-main {
    flex: 1;
    background: #fff;
    border-bottom: 1px solid #f0f0f0;
}
.history {
    display: flex;
    justify-content: space-between;
    height: 29px;
    border-bottom: 1px solid #98a5b5;
    font-size: 12px;
}
.history p {
    padding: 1px;
}
.scroll {
    width: 17px;
    background: #f0f0f0;
}
.scroll svg {
    width: 14px;
    height: 28px;
}
.prompt {
    display: flex;
    align-items: center;
    height: 17px;
    font-size: 12px;
}
.prompt label {
    padding-left: 1px;
    line-height: 15px;
    font-weight: bold;
}
.caret {
    width: 1px;
    height: 15px;
    margin-left: 2px;
    background: #000;
}
.prompt input {
    flex: 1;
}
.spin {
    display: flex;
    flex-direction: column;
    width: 16px;
}
.spin button {
    height: 8px;
    border: 1px solid #aaa;
    background: #eee;
    font-size: 6px;
    line-height: 6px;
}

/* Toolbar */
.toolbar {
    display: flex;
    height: 61px;
    padding-top: 4px;
}
.toolbar .grip {
    margin-bottom: 5px;
}
.toolbar-main {
    flex: 1;
    display: flex;
    flex-direction: column;
}
.tabs {
    display: flex;
    height: 15px;
    border-bottom: 1px solid #9aa5b8;
}
.tab {
    position: relative;
    z-index: 1;
    height: 14px;
    margin-left: 6px;
    padding: 0 7px 0 2px;
    border: 1px solid #a4aec2;
    border-width: 1px 1px 0 0;
    border-radius: 0 4px 0 0;
    background: #d3d8ea;
    line-height: 14px;
    white-space: nowrap;
}
.tab::before {
    content: "";
    position: absolute;
    left: -5px;
    top: -1px;
    width: 8px;
    height: 14px;
    border: 1px solid #a4aec2;
    border-width: 1px 0 0 1px;
    background: inherit;
    transform: skewX(-24deg);
    z-index: -1;
}
.tab.active {
    height: 15px;
    padding: 0 7px 0 3px;
    background: #f7f8fa;
}
.gear {
    width: 14px;
    height: 14px;
    margin-left: auto;
    margin-right: 2px;
}
.tools {
    display: flex;
    flex: 1;
    padding-top: 1px;
    background: linear-gradient(#f5f6f8, #dfe1e9);
}
.tool {
    position: relative;
    width: 28px;
    height: 28px;
}
.tool svg {
    display: block;
    width: 28px;
    height: 28px;
}
.tool.more::after {
    content: "";
    position: absolute;
    right: 1px;
    bottom: 1px;
    border: 3px solid transparent;
    border-right-color: #666;
    border-bottom-color: #666;
}
.tool.pressed {
    border-radius: 3px;
    background: linear-gradient(#d9effc, #a9d8f5);
    box-shadow: inset 0 0 0 1px #3c7fb1;
}
.qmark {
    fill: #fff;
    font: bold 17px "Liberation Serif", serif;
    text-anchor: middle;
}

/* Workspace */
.workspace {
    flex: 1;
    display: flex;
    min-height: 0;
}
.sidebar {
    width: 64px;
}
.hgrip {
    height: 4px;
    margin: 3px 6px 0 3px;
    border: 1px solid #b4b9cb;
    border-width: 1px 0;
}
.palette {
    display: grid;
    grid-template-columns: 28px 28px;
    padding: 1px 0 0 1px;
}
.node {
    fill: #fff;
    stroke: #000;
}
.center {
    flex: 1;
    display: flex;
    flex-direction: column;
    min-width: 0;
}
.viewport {
    position: relative;
    flex: 1;
    min-height: 0;
    border-bottom: 1px solid #9aa5b8;
}
.scene {
    display: block;
    width: 100%;
    height: 100%;
}
.view-label {
    position: absolute;
    left: 0;
    top: 0;
    display: flex;
    align-items: center;
    height: 19px;
    padding-left: 10px;
    background: #86a0c0;
    font-size: 12px;
}
.view-label span {
    padding-right: 6px;
    border-right: 1px solid #000;
}
.view-label i {
    margin: 2px 2px 0 1px;
    border: 4px solid transparent;
    border-top-color: #000;
    border-bottom-width: 0;
}
.grid-minor {
    stroke: #8f969e;
    stroke-width: 0.6;
}
.grid-major {
    stroke: #82858c;
    stroke-width: 0.8;
}
.axis-x {
    stroke: #a33a40;
    stroke-width: 1.4;
}
.axis-y {
    stroke: #3a963a;
    stroke-width: 1.6;
}
.axis-text {
    fill: #555a60;
    font-size: 14px;
}
.view-tabs {
    display: flex;
    height: 21px;
    padding-top: 1px;
}
.vtab {
    position: relative;
    z-index: 1;
    height: 20px;
    margin-right: 1px;
    padding: 0 4px 0 10px;
    border: 1px solid #a4aec2;
    border-width: 0 1px 1px 0;
    border-radius: 0 0 4px 0;
    background: linear-gradient(to right, transparent 8px, #d3d8ea 8px);
    font-size: 12px;
    line-height: 20px;
}
.vtab::before {
    content: "";
    position: absolute;
    left: 3px;
    top: 0;
    width: 8px;
    height: 20px;
    border: 1px solid #a4aec2;
    border-width: 0 0 1px 1px;
    background: #d3d8ea;
    transform: skewX(22deg);
    z-index: -1;
}
.vtab.active {
    background: linear-gradient(to right, transparent 8px, #fff 8px);
}
.vtab.active::before {
    background: #fff;
}
.vtab.add {
    padding: 0 9px 0 15px;
    background: none;
}
.vtab.add::before {
    background: none;
}
.vtab.add svg {
    width: 9px;
    height: 9px;
}

/* Properties panel */
.panel {
    display: flex;
    flex-direction: column;
    width: 284px;
    padding: 0 0 2px 8px;
}
.panel .hgrip {
    margin-right: 0;
}
.ptabs {
    display: flex;
    align-items: flex-end;
    height: 22px;
}
.ptab {
    display: flex;
    align-items: center;
    width: 63px;
    height: 21px;
    padding: 0 0 2px 1px;
    border: 1px solid #a4aec2;
    border-width: 1px 0 0 1px;
    border-radius: 4px 0 0 0;
    background: #d3d8ea;
    clip-path: polygon(0 0, 84% 0, 100% 60%, 100% 100%, 0 100%);
    font-size: 12px;
    white-space: nowrap;
}
.ptab.active {
    background: #f5f6f8;
}
.ptab svg {
    flex: none;
    width: 19px;
    height: 19px;
}
.ptabs .gear {
    margin-right: 0;
    width: 15px;
    height: 15px;
}
.pbody {
    flex: 1;
    padding: 6px 6px 0 3px;
    border: 1px solid #a4aec2;
    background: #f5f6f8;
}
.props {
    width: 100%;
    border-collapse: collapse;
    table-layout: fixed;
    border: 1px solid #dfe1e9;
}
.props tr {
    height: 19px;
}
.props tr.group {
    height: 23px;
}
.props th {
    padding-left: 2px;
    border-bottom: 1px solid #dfe1e9;
    font-weight: normal;
    text-align: left;
}
.props td {
    height: 19px;
    border-bottom: 1px solid #dfe1e9;
    background: #fff;
}
.props td:first-child {
    padding-left: 11px;
    border-right: 1px solid #dfe1e9;
    background: linear-gradient(to right, #f5f6f8 8px, #fff 8px);
}
.props label, .props input, .props select {
    display: block;
    height: 17px;
    line-height: 18px;
}
.props input, .props select {
    width: 100%;
    padding-left: 4px;
}
.props .off {
    color: #777;
}
.props .off td:last-child {
    background: #dfe1e9;
}
.combo {
    display: flex;
}
.combo select {
    flex: 1;
    padding-left: 3px;
    appearance: none;
}
.combo svg {
    width: 18px;
    height: 18px;
    border-left: 1px solid #adadad;
    background: #e1e1e1;
}
.combo input {
    flex: 1;
    min-width: 0;
    padding-left: 2px;
}
.place, .browse {
    display: block;
    height: 17px;
    border: 1px solid #adadad;
    background: #e1e1e1;
}
.place {
    width: 130px;
    margin-left: 1px;
}
.browse {
    width: 17px;
}

/* Tick boxes */
input[type="checkbox"] {
    appearance: none;
    width: 13px;
    height: 13px;
    padding: 0;
    border: 1px solid #333;
    background: #fff;
}
input[type="checkbox"]:checked::before {
    content: "";
    display: block;
    width: 8px;
    height: 4px;
    margin: 2px 0 0 1px;
    border: 1px solid #333;
    border-width: 0 0 1px 1px;
    transform: rotate(-45deg);
}
input[type="checkbox"]:disabled {
    border-color: #bbb;
    background: #ddd;
}
.props input[type="checkbox"] {
    width: 13px;
    height: 13px;
    margin-left: 4px;
    padding: 0;
}

/* Object snaps */
.osnap {
    display: flex;
    height: 42px;
    padding-top: 5px;
}
.osnap .grip {
    height: 34px;
    margin-right: 4px;
}
.osnap label {
    display: flex;
    align-items: center;
    gap: 5px;
    height: 23px;
    margin-right: 6px;
}

/* Status bar */
.status {
    display: flex;
    height: 21px;
    border-top: 1px solid #98a5b5;
    border-bottom: 1px solid #222;
    font-size: 12px;
}
.status > * {
    display: flex;
    align-items: center;
    justify-content: center;
    border-right: 1px solid #98a5b5;
    white-space: nowrap;
}
.status .rest {
    flex: 1;
    justify-content: flex-start;
    padding-left: 3px;
    border: none;
}
.status .on {
    background: #e5f2fc;
    font-weight: bold;
}
.w-plane {
    width: 57px;
}
.w-coord {
    width: 88px;
}
.status .w-layer {
    width: 173px;
    justify-content: flex-start;
    gap: 2px;
    padding-left: 3px;
}
.w-layer i {
    width: 14px;
    height: 14px;
    background: #000;
}
.w-snap {
    width: 118px;
}
.w-ortho {
    width: 39px;
}
.w-planar {
    width: 62px;
}
.w-osnap {
    width: 54px;
}
.w-track {
    width: 85px;
}
.w-gumball {
    width: 66px;
}
.w-history {
    width: 108px;
}
.w-filter {
    width: 45px;
}
```
FILE: script.js
```
// Draws the construction plane grid through the camera shown in the panel
const camera = [24.792, 41.13, 18.079];
const target = [1.784, 2.225, 6.221];
const center = [730, 543];
const focal = 1598;
const size = 70;

const sub = (a, b) => a.map((v, i) => v - b[i]);
const dot = (a, b) => a[0] * b[0] + a[1] * b[1] + a[2] * b[2];
const unit = a => a.map(v => v / Math.sqrt(dot(a, a)));
const cross = (a, b) => [a[1] * b[2] - a[2] * b[1], a[2] * b[0] - a[0] * b[2], a[0] * b[1] - a[1] * b[0]];

const forward = unit(sub(target, camera));
const right = unit(cross(forward, [0, 0, 1]));
const up = cross(right, forward);

function toView(x, y) {
    const p = sub([x, y, 0], camera);
    return [dot(p, right), dot(p, up), dot(p, forward)];
}

function segment(x1, y1, x2, y2) {
    let a = toView(x1, y1);
    let b = toView(x2, y2);
    const near = 5;
    if (a[2] < near && b[2] < near) return '';
    // cut the part that lies behind the camera
    if (a[2] < near || b[2] < near) {
        const t = (near - a[2]) / (b[2] - a[2]);
        const c = a.map((v, i) => v + (b[i] - v) * t);
        if (a[2] < near) a = c; else b = c;
    }
    const s = p => (center[0] + focal * p[0] / p[2]).toFixed(1) + ' ' + (center[1] - focal * p[1] / p[2]).toFixed(1);
    return 'M' + s(a) + 'L' + s(b);
}

let minor = '';
let major = '';
for (let i = -size; i <= size; i++) {
    const lines = segment(i, -size, i, size) + segment(-size, i, size, i);
    if (i % 5 === 0) major += lines; else minor += lines;
}
document.getElementById('grid-minor').setAttribute('d', minor);
document.getElementById('grid-major').setAttribute('d', major);
document.getElementById('axis-x').setAttribute('d', segment(0, 0, size, 0));
document.getElementById('axis-y').setAttribute('d', segment(0, 0, 0, size));
```
